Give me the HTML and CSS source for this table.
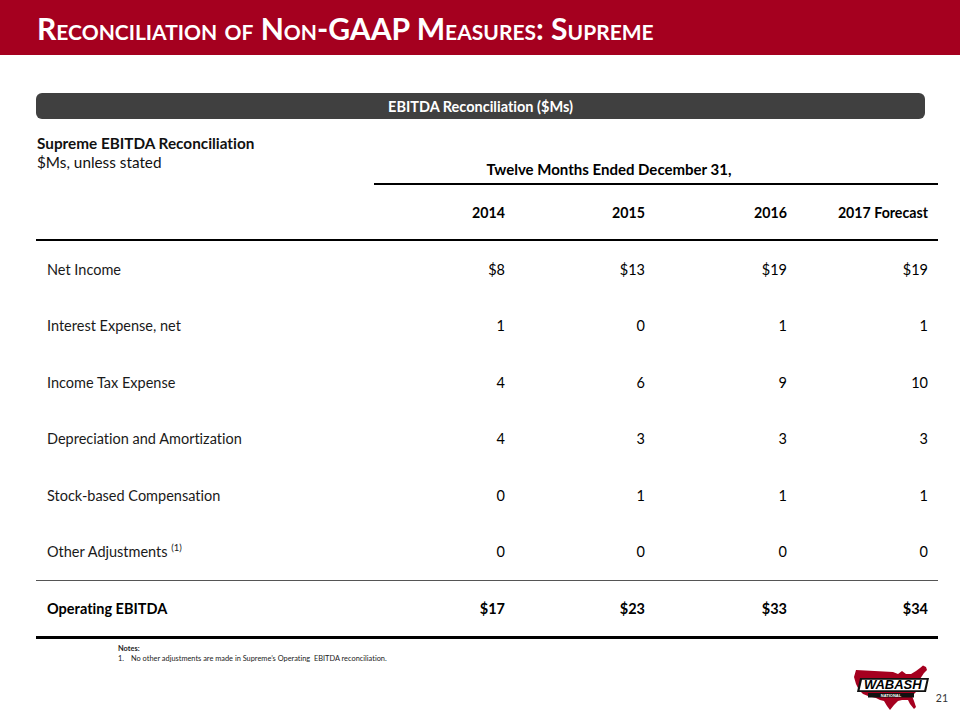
FILE: index.html
```html
<!DOCTYPE html>
<html lang="en">
<head>
<meta charset="utf-8">
<title>Reconciliation of Non-GAAP Measures: Supreme</title>
<link rel="stylesheet" href="styles.css">
</head>
<body>
<div class="slide">
  <header class="banner">
    <h1 class="title">Reconciliation of Non-GAAP Measures: Supreme</h1>
  </header>

  <main class="content">
    <div class="pill">EBITDA Reconciliation ($Ms)</div>

    <div class="tbl">
      <div class="top">
        <div class="intro">
          <div class="intro-title">Supreme EBITDA Reconciliation</div>
          <div class="intro-sub">$Ms, unless stated</div>
        </div>
        <div class="period">Twelve Months Ended December 31,</div>
      </div>

      <div class="row head">
        <div class="cell label"></div>
        <div class="cell num">2014</div>
        <div class="cell num">2015</div>
        <div class="cell num">2016</div>
        <div class="cell num">2017 Forecast</div>
      </div>

      <div class="body">
        <div class="row">
          <div class="cell label">Net Income</div>
          <div class="cell num">$8</div>
          <div class="cell num">$13</div>
          <div class="cell num">$19</div>
          <div class="cell num">$19</div>
        </div>
        <div class="row">
          <div class="cell label">Interest Expense, net</div>
          <div class="cell num">1</div>
          <div class="cell num">0</div>
          <div class="cell num">1</div>
          <div class="cell num">1</div>
        </div>
        <div class="row">
          <div class="cell label">Income Tax Expense</div>
          <div class="cell num">4</div>
          <div class="cell num">6</div>
          <div class="cell num">9</div>
          <div class="cell num">10</div>
        </div>
        <div class="row">
          <div class="cell label">Depreciation and Amortization</div>
          <div class="cell num">4</div>
          <div class="cell num">3</div>
          <div class="cell num">3</div>
          <div class="cell num">3</div>
        </div>
        <div class="row">
          <div class="cell label">Stock-based Compensation</div>
          <div class="cell num">0</div>
          <div class="cell num">1</div>
          <div class="cell num">1</div>
          <div class="cell num">1</div>
        </div>
        <div class="row">
          <div class="cell label">Other Adjustments <sup class="fn">(1)</sup></div>
          <div class="cell num">0</div>
          <div class="cell num">0</div>
          <div class="cell num">0</div>
          <div class="cell num">0</div>
        </div>
      </div>

      <div class="row total">
        <div class="cell label">Operating EBITDA</div>
        <div class="cell num">$17</div>
        <div class="cell num">$23</div>
        <div class="cell num">$33</div>
        <div class="cell num">$34</div>
      </div>
    </div>

    <div class="notes">
      <div class="notes-head">Notes:</div>
      <div class="note"><span class="note-num">1.</span><span>No other adjustments are made in Supreme’s Operating&nbsp; EBITDA reconciliation.</span></div>
    </div>
  </main>

  <footer class="footer">
    <svg class="logo" width="78" height="46" viewBox="0 0 78 46" aria-label="Wabash National">
      <path fill="#a5001f" d="M3 5 L40 7 L45 9 L49 6 L53 9 L58 9 L63 6 L67 3 L70 0.5 L73 2 L74 5 L71 8 L69 11 L67 14 L65 18 L66 22 L63 27 L59 31 L61 36 L63 42 L61 44 L57 39 L55 35 L49 35 L45 36 L41 40 L37 45 L34 41 L31 36 L27 35 L23 33 L15 31 L10 29 L6 25 L3 19 L1 12 Z"/>
      <polygon points="7,13 76,13 73,27 4,27" fill="#111"/>
      <polygon points="9,14.8 73.6,14.8 71.2,25.2 6.6,25.2" fill="#fff"/>
      <text x="39.8" y="24.2" text-anchor="middle" class="logo-word">WABASH</text>
      <rect x="15" y="28" width="46" height="4.5" fill="#111"/>
      <text x="38" y="31.8" text-anchor="middle" class="logo-nat">NATIONAL</text>
    </svg>
    <span class="page">21</span>
  </footer>
</div>
</body>
</html>
```

FILE: styles.css
```css
* { box-sizing: border-box; }

html, body {
  margin: 0;
  padding: 0;
  background: #ffffff;
}

body {
  font-family: "Lato", "Noto Sans", "Liberation Sans", sans-serif;
  font-variant-ligatures: none;
  color: #000;
}

.slide {
  width: 960px;
  height: 720px;
  display: flex;
  flex-direction: column;
  overflow: hidden;
}

/* Banner */
.banner {
  height: 55px;
  background: #a5001f;
  display: flex;
  align-items: center;
  padding-left: 37px;
}

.title {
  margin: 0;
  color: #ffffff;
  font-size: 30.1px;
  font-weight: 700;
  font-variant: small-caps;
  letter-spacing: 0;
  line-height: 1;
  padding-top: 2px;
  white-space: nowrap;
}

/* Content */
.content {
  padding-left: 36px;
}

.pill {
  margin-top: 38px;
  width: 889px;
  height: 26px;
  background: #404040;
  border-radius: 6px;
  color: #ffffff;
  font-weight: 700;
  font-size: 14.5px;
  display: flex;
  align-items: center;
  justify-content: center;
}

.tbl {
  width: 902px;
  margin-top: 15px;
  font-size: 14.5px;
}

.top {
  display: grid;
  grid-template-columns: 338px 564px;
  height: 51px;
}

.intro {
  padding-left: 1px;
  line-height: 19px;
  font-size: 15.3px;
  color: #111;
}

.intro-title {
  font-weight: 700;
}

.period {
  align-self: end;
  border-bottom: 2px solid #000;
  text-align: center;
  font-weight: 700;
  line-height: 18px;
  padding-bottom: 5px;
  padding-right: 94px;
  font-size: 15px;
  white-space: nowrap;
}

.row {
  display: grid;
  grid-template-columns: 338px 141px 140px 142px 141px;
  align-items: center;
}

.head {
  height: 56px;
  border-bottom: 2px solid #000;
  font-weight: 700;
  font-size: 14.2px;
}

.body .row {
  height: 56.5px;
}

.cell.label {
  padding-left: 11px;
  color: #1a1a1a;
  white-space: nowrap;
}

.cell.num {
  text-align: right;
  padding-right: 10px;
  white-space: nowrap;
}

.fn {
  font-size: 9.5px;
  vertical-align: 0;
  position: relative;
  top: -6px;
}

.total {
  height: 59px;
  border-top: 1px solid #555;
  border-bottom: 3px solid #000;
  font-weight: 700;
}

.total .cell.label {
  color: #000;
}

/* Notes */
.notes {
  margin-top: 5px;
  padding-left: 82px;
  font-size: 7.4px;
  line-height: 9.5px;
  color: #222;
}

.notes-head {
  font-weight: 700;
}

.note-num {
  display: inline-block;
  width: 13px;
}

/* Footer */
.footer {
  margin-top: 2px;
  display: flex;
  justify-content: flex-end;
  align-items: flex-end;
  padding-right: 12px;
  gap: 5px;
}

.logo {
  display: block;
}

.logo-word {
  font-family: "Liberation Sans", "Noto Sans", sans-serif;
  font-weight: 700;
  font-style: italic;
  font-size: 13px;
  fill: #000;
}

.logo-nat {
  font-family: "Liberation Sans", sans-serif;
  font-weight: 700;
  font-size: 4px;
  fill: #ffffff;
}

.page {
  font-size: 10.5px;
  color: #333;
  line-height: 12px;
  margin-bottom: 7px;
}
```
